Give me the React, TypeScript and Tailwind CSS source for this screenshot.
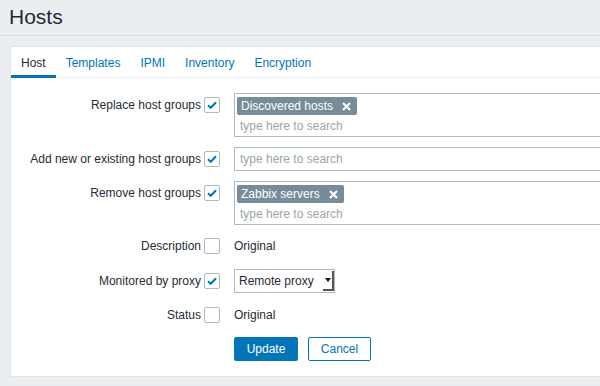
import React from 'react';

function Check({ checked }: { checked?: boolean }) {
  return (
    <span className="flex h-[16px] w-[16px] shrink-0 items-center justify-center rounded-[2px] border border-[#acbbc2] bg-white">
      {checked && (
        <svg width="12" height="12" viewBox="0 0 12 12">
          <path d="M2 6.2 L4.8 8.8 L10 3.2" fill="none" stroke="#0275b8" strokeWidth="2" />
        </svg>
      )}
    </span>
  );
}

function Tag({ text }: { text: string }) {
  return (
    <span className="flex h-[18px] items-center gap-[9px] rounded-[2px] bg-[#768d99] pl-[4px] pr-[6px] text-white">
      {text}
      <svg width="9" height="9" viewBox="0 0 9 9">
        <path d="M1 1 L8 8 M8 1 L1 8" stroke="white" strokeWidth="2.2" />
      </svg>
    </span>
  );
}

function Row({ label, checked, top, children }: { label: string; checked?: boolean; top: string; children: React.ReactNode }) {
  return (
    <div className={`flex items-start ${top}`}>
      <div className="flex h-[24px] w-[209px] shrink-0 items-center justify-end gap-[3px]">
        <span className="whitespace-nowrap">{label}</span>
        <Check checked={checked} />
      </div>
      <div className="ml-[14px] shrink-0">{children}</div>
    </div>
  );
}

export default function App() {
  const tabs = ['Host', 'Templates', 'IPMI', 'Inventory', 'Encryption'];
  return (
    <div className="h-[386px] w-[600px] overflow-hidden bg-[#ebeef0] text-[12px] text-[#1f2c33]" style={{ fontFamily: '"Liberation Sans", Arial, sans-serif' }}>
      {/* Header */}
      <div className="h-[36px] border-b border-[#dde2e5] pl-[9px] pt-[5px]">
        <h1 className="text-[21px] leading-[24px]">Hosts</h1>
      </div>

      {/* Card */}
      <div className="ml-[10px] mt-[10px] w-[620px] border border-[#dfe4e7] bg-white pb-[15px]">
        <div className="flex border-b border-[#ebeef0] h-[31px]">
          {tabs.map((t, i) => (
            <div
              key={t}
              className={
                i === 0
                  ? 'flex h-[31px] items-center border-b-[3px] border-[#0275b8] px-[10px] pt-[3px] text-[#1f2c33]'
                  : 'flex h-[31px] items-center border-b-[3px] border-transparent px-[10px] pt-[3px] text-[#0275b8]'
              }
            >
              {t}
            </div>
          ))}
        </div>

        <div className="pt-[15px]">
          <Row label="Replace host groups" checked top="mt-0">
            <div className="h-[44px] w-[420px] border border-[#acbbc2] pl-[2px] pt-[3px]">
              <div className="flex">
                <Tag text="Discovered hosts" />
              </div>
              <div className="pl-[3px] pt-[2px] text-[#9aa5ab]">type here to search</div>
            </div>
          </Row>

          <Row label="Add new or existing host groups" checked top="mt-[10px]">
            <div className="flex h-[24px] w-[420px] items-center border border-[#acbbc2] pl-[5px] text-[#9aa5ab]">
              type here to search
            </div>
          </Row>

          <Row label="Remove host groups" checked top="mt-[10px]">
            <div className="h-[44px] w-[420px] border border-[#acbbc2] pl-[2px] pt-[3px]">
              <div className="flex">
                <Tag text="Zabbix servers" />
              </div>
              <div className="pl-[3px] pt-[2px] text-[#9aa5ab]">type here to search</div>
            </div>
          </Row>

          <Row label="Description" top="mt-[9px]">
            <div className="flex h-[24px] items-center">Original</div>
          </Row>

          <Row label="Monitored by proxy" checked top="mt-[11px]">
            <div className="flex h-[24px] w-[101px] items-center justify-between border border-[#acbbc2] pl-[4px]">
              <span>Remote proxy</span>
              <span className="flex h-[20px] w-[11px] items-center justify-center border-b-2 border-r-2 border-[#555]">
                <svg width="6" height="4" viewBox="0 0 6 4">
                  <path d="M0 0 L6 0 L3 4 Z" fill="#111" />
                </svg>
              </span>
            </div>
          </Row>

          <Row label="Status" top="mt-[10px]">
            <div className="flex h-[24px] items-center">Original</div>
          </Row>

          <div className="ml-[223px] mt-[10px] flex gap-[10px]">
            <button className="h-[24px] w-[64px] rounded-[2px] bg-[#0275b8] text-white">Update</button>
            <button className="h-[24px] w-[63px] rounded-[2px] border border-[#0275b8] bg-white text-[#0275b8]">Cancel</button>
          </div>
        </div>
      </div>
    </div>
  );
}
